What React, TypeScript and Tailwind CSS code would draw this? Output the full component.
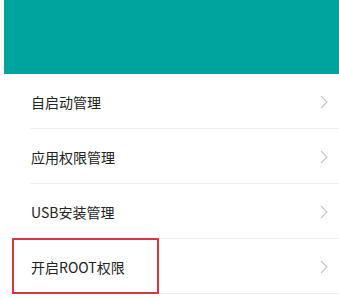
import React from "react";

const items = ["自启动管理", "应用权限管理", "USB安装管理", "开启ROOT权限"];

function Chevron() {
  return (
    <svg width="8" height="14" viewBox="0 0 8 14" fill="none" className="shrink-0">
      <path d="M1 1l6 6-6 6" stroke="#c4c4c4" strokeWidth="1.1" />
    </svg>
  );
}

export default function App() {
  return (
    <div
      className="w-full h-[300px] bg-white overflow-hidden"
      style={{ fontFamily: '"Noto Sans CJK SC", "Noto Sans", sans-serif' }}
    >
      <div className="ml-[4px] h-[74px] bg-[#00a49e]" />
      <div className="ml-[30px]">
        {items.map((label, i) => (
          <div
            key={label}
            className="relative h-[55px] flex items-center justify-between pl-[1px] pr-[11px] pt-[2px] border-b border-[#efefef]"
          >
            <span className="text-[14px] text-[#222]">{label}</span>
            <Chevron />
            {i === items.length - 1 && (
              <div className="absolute left-[-18px] top-[-1px] w-[147px] h-[56px] border-2 border-[#d8363f]" />
            )}
          </div>
        ))}
      </div>
    </div>
  );
}
